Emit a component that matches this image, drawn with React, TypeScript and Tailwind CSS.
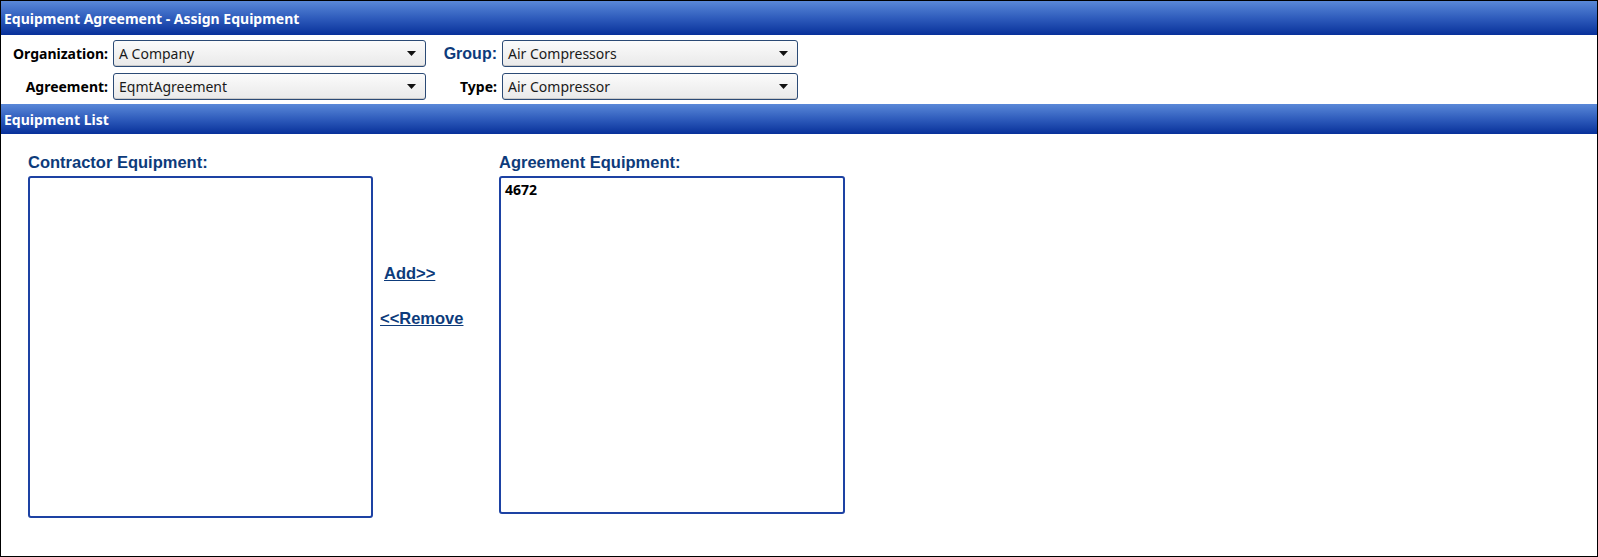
import React from 'react';

interface SelectProps {
  value: string;
  width: string;
}

function FakeSelect({ value, width }: SelectProps) {
  return (
    <div
      className={`${width} h-[27px] flex items-center justify-between pl-[5px] pr-[9px] border border-[#2b4a75] rounded-[3px] bg-gradient-to-b from-[#fbfbfb] to-[#e9e9e9] shadow-[inset_0_-1px_0_#c9c9c9]`}
    >
      <span className="text-[14px] text-[#1a1a1a] font-['Noto_Sans',sans-serif] leading-none">{value}</span>
      <svg width="9" height="5" viewBox="0 0 9 5">
        <path d="M0 0 L9 0 L4.5 5 Z" fill="#111" />
      </svg>
    </div>
  );
}

function BarHeader({ title, h }: { title: string; h: string }) {
  return (
    <div
      className={`${h} flex items-center pl-[3px] bg-gradient-to-b from-[#5a88d8] via-[#2f5cbc] to-[#08309a]`}
    >
      <span className="text-white font-bold text-[14px] font-['Noto_Sans',sans-serif]">{title}</span>
    </div>
  );
}

export default function App() {
  const label = "font-['Liberation_Sans',Arial,sans-serif] font-bold text-[16.5px] text-[#0d3b7b]";
  const formLabel = "font-['Noto_Sans',sans-serif] font-bold text-[14px] text-black text-right";

  return (
    <div className="w-[1598px] h-[557px] bg-white border border-black overflow-hidden">
      <BarHeader title="Equipment Agreement - Assign Equipment" h="h-[34px]" />

      <div className="pt-[5px] pb-[4px] flex flex-col gap-[6px]">
        <div className="flex items-center">
          <div className={`w-[107px] ${formLabel}`}>Organization:</div>
          <div className="ml-[5px]">
            <FakeSelect value="A Company" width="w-[313px]" />
          </div>
          <div className="w-[71px] text-right font-['Liberation_Sans',Arial,sans-serif] font-bold text-[16px] text-[#0d3b7b]">
            Group:
          </div>
          <div className="ml-[5px]">
            <FakeSelect value="Air Compressors" width="w-[296px]" />
          </div>
        </div>
        <div className="flex items-center">
          <div className={`w-[107px] ${formLabel}`}>Agreement:</div>
          <div className="ml-[5px]">
            <FakeSelect value="EqmtAgreement" width="w-[313px]" />
          </div>
          <div className={`w-[71px] ${formLabel}`}>Type:</div>
          <div className="ml-[5px]">
            <FakeSelect value="Air Compressor" width="w-[296px]" />
          </div>
        </div>
      </div>

      <BarHeader title="Equipment List" h="h-[30px]" />

      <div className="flex pl-[27px] pt-[16px]">
        <div className="flex flex-col">
          <div className={`${label} h-[26px]`}>Contractor Equipment:</div>
          <div className="w-[345px] h-[342px] border-2 border-[#1d42a3] rounded-[3px]" />
        </div>

        <div className="w-[126px] flex flex-col pt-[111px] font-['Liberation_Sans',Arial,sans-serif] font-bold text-[16.5px] text-[#0d3b7b]">
          <span className="ml-[11px] underline">Add&gt;&gt;</span>
          <span className="ml-[7px] mt-[20px] underline">&lt;&lt;Remove</span>
        </div>

        <div className="flex flex-col">
          <div className={`${label} h-[26px]`}>Agreement Equipment:</div>
          <div className="w-[346px] h-[338px] border-2 border-[#1d42a3] rounded-[3px] pl-[4px] pt-[3px]">
            <div className="font-['Noto_Sans',sans-serif] font-bold text-[14px] text-black leading-[18px]">4672</div>
          </div>
        </div>
      </div>
    </div>
  );
}
